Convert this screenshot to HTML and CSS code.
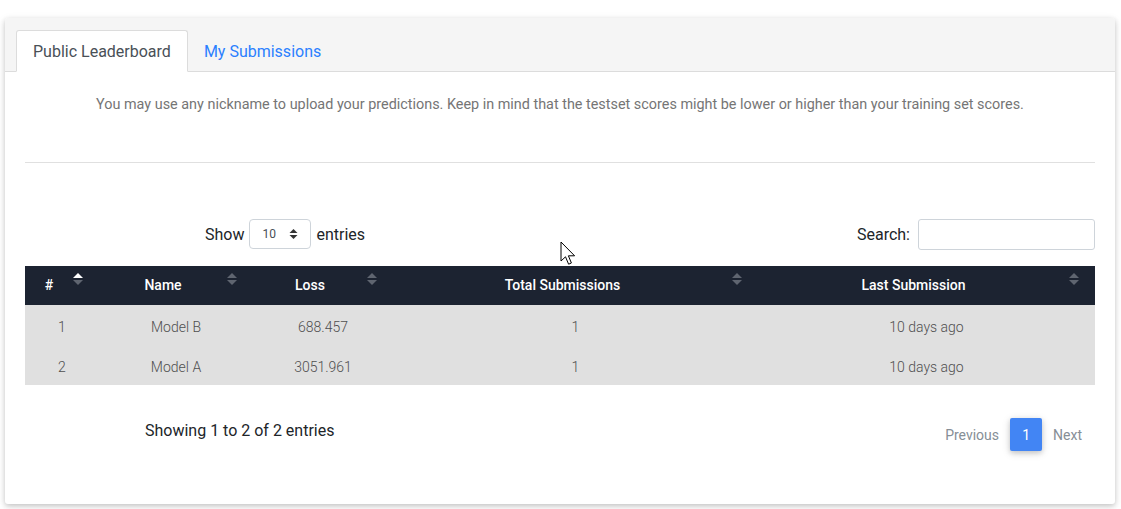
FILE: index.html
```html
<!DOCTYPE html>
<html>
<head>
<meta charset="utf-8">
<link rel="stylesheet" href="styles.css">
</head>
<body>
<div class="card">
  <div class="card-header">
    <div class="tab active">Public Leaderboard</div>
    <div class="tab link">My Submissions</div>
  </div>
  <div class="card-body">
    <p class="note">You may use any nickname to upload your predictions. Keep in mind that the testset scores might be lower or higher than your training set scores.</p>
    <hr class="sep">
    <div class="controls">
      <div class="length">
        <span>Show</span>
        <div class="select"><span>10</span>
          <svg width="9" height="12" viewBox="0 0 9 12"><path d="M4.5 1 L8.5 5 H0.5 Z M4.5 11 L8.5 7 H0.5 Z" fill="#333"/></svg>
        </div>
        <span>entries</span>
      </div>
      <div class="search">
        <span>Search:</span>
        <div class="input"></div>
      </div>
    </div>
    <table class="board">
      <colgroup>
        <col class="c1"><col class="c2"><col class="c3"><col class="c4"><col class="c5">
      </colgroup>
      <thead>
        <tr>
          <th><span>#</span><i class="sort asc"></i></th>
          <th><span>Name</span><i class="sort"></i></th>
          <th><span>Loss</span><i class="sort"></i></th>
          <th><span>Total Submissions</span><i class="sort"></i></th>
          <th><span>Last Submission</span><i class="sort"></i></th>
        </tr>
      </thead>
      <tbody>
        <tr><td>1</td><td>Model B</td><td>688.457</td><td>1</td><td>10 days ago</td></tr>
        <tr><td>2</td><td>Model A</td><td>3051.961</td><td>1</td><td>10 days ago</td></tr>
      </tbody>
    </table>
    <div class="footer">
      <div class="info">Showing 1 to 2 of 2 entries</div>
      <div class="pager">
        <span class="plink">Previous</span>
        <span class="pnum">1</span>
        <span class="plink">Next</span>
      </div>
    </div>
  </div>
</div>
<svg class="cursor" width="20" height="28" viewBox="0 0 20 28"><path d="M1 1 L1 20 L5.5 15.8 L8.6 23.2 L11.4 22 L8.4 14.8 L14.6 14.8 Z" fill="#fff" stroke="#000" stroke-width="1" stroke-linejoin="miter"/></svg>
</body>
</html>
```

FILE: styles.css
```css
html, body {
  margin: 0;
  padding: 0;
  background: #fff;
  font-family: Roboto, "Noto Sans", sans-serif;
}
body {
  padding: 18px 6px 5px 5px;
  position: relative;
}
.card {
  width: 1110px;
  height: 486px;
  background: #fff;
  border-radius: 3px;
  box-shadow: 0 2px 5px 0 rgba(0,0,0,0.16), 0 2px 8px 0 rgba(0,0,0,0.10);
  box-sizing: border-box;
  overflow: hidden;
}
.card-header {
  height: 54px;
  box-sizing: border-box;
  background: #f5f5f5;
  border-bottom: 1px solid #dcdcdc;
  padding: 13px 11px 0;
  display: flex;
  align-items: flex-end;
}
.tab {
  height: 41px;
  box-sizing: border-box;
  padding: 0 16px;
  display: flex;
  align-items: center;
  font-size: 16px;
  margin-bottom: -1px;
}
.tab.active {
  background: #fff;
  color: #495057;
  border: 1px solid #dcdcdc;
  border-bottom-color: #fff;
  border-radius: 3px 3px 0 0;
  height: 42px;
  padding-top: 1px;
}
.tab.link {
  color: #2b80ff;
  padding-left: 16px;
}
.card-body {
  padding: 20px 20px 0;
}
.note {
  margin: 0;
  padding-top: 2px;
  text-align: center;
  font-size: 14.4px;
  line-height: 21px;
  color: #757575;
}
.sep {
  border: 0;
  border-top: 1px solid #e0e0e0;
  margin: 47px 0 0;
}
.controls {
  margin-top: 56px;
  display: flex;
  justify-content: space-between;
  align-items: center;
  height: 30px;
}
.length {
  padding-left: 180px;
  display: flex;
  align-items: center;
  gap: 5px;
  font-size: 16px;
  color: #212529;
}
.select {
  width: 62px;
  height: 30px;
  box-sizing: border-box;
  border: 1px solid #ced4da;
  border-radius: 4px;
  display: flex;
  align-items: center;
  justify-content: space-between;
  padding: 0 12px 0 12px;
  font-size: 12px;
  color: #495057;
}
.search {
  display: flex;
  align-items: center;
  gap: 8px;
  font-size: 16px;
  color: #212529;
}
.input {
  width: 177px;
  height: 31px;
  box-sizing: border-box;
  border: 1px solid #ced4da;
  border-radius: 3px;
}
.board {
  margin-top: 17px;
  width: 1070px;
  border-collapse: collapse;
  table-layout: fixed;
}
.c1 { width: 74px; }
.c2 { width: 154px; }
.c3 { width: 140px; }
.c4 { width: 365px; }
.c5 { width: 337px; }
.board th {
  background: #1c2331;
  color: #fff;
  font-weight: 500;
  font-size: 14px;
  height: 39px;
  padding: 0 26px 2px 0;
  position: relative;
  text-align: center;
  box-sizing: border-box;
}
.sort {
  position: absolute;
  right: 16px;
  top: 7px;
  width: 10px;
  height: 12px;
}
.sort::before, .sort::after {
  content: "";
  position: absolute;
  left: 0;
  border-left: 5px solid transparent;
  border-right: 5px solid transparent;
}
.sort::before {
  top: 0;
  border-bottom: 5px solid #5f6570;
}
.sort::after {
  top: 7px;
  border-top: 5px solid #5f6570;
}
.sort.asc::before {
  border-bottom-color: #fff;
}
.board td {
  background: #e0e0e0;
  height: 40px;
  text-align: center;
  font-size: 14px;
  font-weight: 300;
  color: #4f4f4f;
  padding: 4px 0 0;
  box-sizing: border-box;
}
.footer {
  display: flex;
  justify-content: space-between;
  align-items: center;
  margin-top: 33px;
}
.info {
  padding-left: 120px;
  font-size: 16px;
  color: #212529;
  margin-top: -8px;
}
.pager {
  display: flex;
  align-items: center;
  padding-right: 2px;
}
.plink {
  font-size: 14px;
  color: #868e96;
  padding: 0 11px;
}
.pnum {
  width: 32px;
  height: 33px;
  display: flex;
  align-items: center;
  justify-content: center;
  background: #4285f4;
  color: #fff;
  font-size: 14px;
  border-radius: 2px;
  box-shadow: 0 2px 5px 0 rgba(0,0,0,0.16), 0 2px 10px 0 rgba(0,0,0,0.12);
}
.cursor {
  position: absolute;
  left: 560px;
  top: 241px;
}
```
